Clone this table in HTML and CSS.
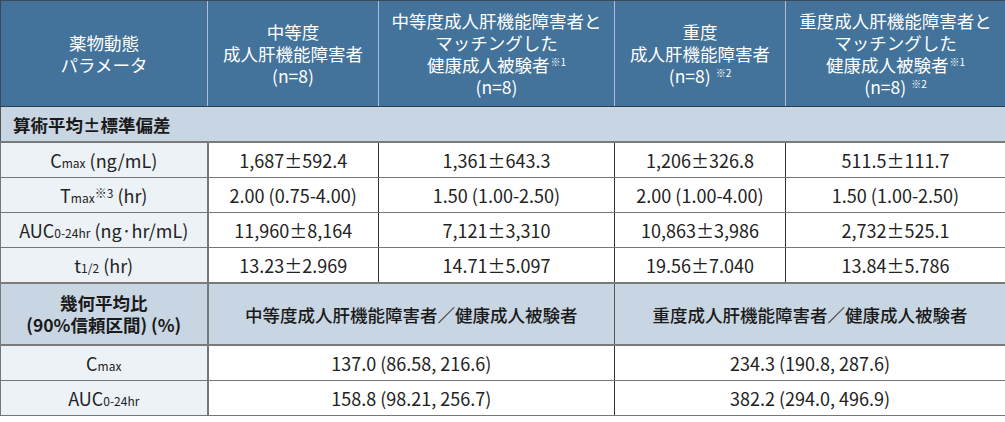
FILE: index.html
```html
<!DOCTYPE html>
<html lang="ja">
<head>
<meta charset="utf-8">
<link rel="stylesheet" href="styles.css">
</head>
<body>
<table class="pk">
  <colgroup>
    <col class="c1"><col class="c2"><col class="c3"><col class="c4"><col class="c5">
  </colgroup>
  <thead>
    <tr class="head">
      <th>薬物動態<br>パラメータ</th>
      <th>中等度<br>成人肝機能障害者<br>(n=8)</th>
      <th>中等度成人肝機能障害者と<br>マッチングした<br>健康成人被験者<sup>※1</sup><br>(n=8)</th>
      <th>重度<br>成人肝機能障害者<br>(n=8)<sup class="sp">※2</sup></th>
      <th>重度成人肝機能障害者と<br>マッチングした<br>健康成人被験者<sup>※1</sup><br>(n=8)<sup class="sp">※2</sup></th>
    </tr>
  </thead>
  <tbody>
    <tr class="section"><td colspan="5">算術平均±標準偏差</td></tr>
    <tr class="row">
      <td class="label">C<span class="sub">max</span> (ng/mL)</td>
      <td>1,687±592.4</td><td>1,361±643.3</td><td>1,206±326.8</td><td>511.5±111.7</td>
    </tr>
    <tr class="row">
      <td class="label">T<span class="sub">max</span><sup class="note">※3</sup> (hr)</td>
      <td>2.00 (0.75-4.00)</td><td>1.50 (1.00-2.50)</td><td>2.00 (1.00-4.00)</td><td>1.50 (1.00-2.50)</td>
    </tr>
    <tr class="row">
      <td class="label">AUC<span class="sub">0-24hr</span> (ng·hr/mL)</td>
      <td>11,960±8,164</td><td>7,121±3,310</td><td>10,863±3,986</td><td>2,732±525.1</td>
    </tr>
    <tr class="row">
      <td class="label">t<span class="sub">1/2</span> (hr)</td>
      <td>13.23±2.969</td><td>14.71±5.097</td><td>19.56±7.040</td><td>13.84±5.786</td>
    </tr>
    <tr class="gm-head">
      <td class="gm-label"><div class="gm-line">幾何平均比</div><div class="gm-line">(90%信頼区間) (%)</div></td>
      <td colspan="2">中等度成人肝機能障害者／健康成人被験者</td>
      <td colspan="2">重度成人肝機能障害者／健康成人被験者</td>
    </tr>
    <tr class="row">
      <td class="label">C<span class="sub">max</span></td>
      <td colspan="2">137.0 (86.58, 216.6)</td>
      <td colspan="2">234.3 (190.8, 287.6)</td>
    </tr>
    <tr class="row">
      <td class="label">AUC<span class="sub">0-24hr</span></td>
      <td colspan="2">158.8 (98.21, 256.7)</td>
      <td colspan="2">382.2 (294.0, 496.9)</td>
    </tr>
  </tbody>
</table>
</body>
</html>
```
FILE: styles.css
```css
html, body {
  margin: 0;
  padding: 0;
  background: #ffffff;
}
body {
  font-family: "Noto Sans CJK JP", "Noto Sans", sans-serif;
  color: #222;
}
.pk {
  border-collapse: collapse;
  table-layout: fixed;
  width: 1005px;
}
.c1 { width: 207px; }
.c2 { width: 171px; }
.c3 { width: 236px; }
.c4 { width: 171px; }
.c5 { width: 220px; }

.pk th, .pk td {
  padding: 0;
  text-align: center;
  vertical-align: middle;
}
.head th {
  height: 105px;
  background: #43739a;
  color: #ffffff;
  font-weight: 400;
  font-size: 17.5px;
  line-height: 22px;
  border-left: 1px solid #a9c0d6;
  border-top: 1px solid #3a4a58;
  border-bottom: 1px solid #2f3f4d;
}
.head th:first-child { border-left: 1px solid #3a4a58; }
.head th:last-child { border-right: 1px solid #3a4a58; }
.head sup {
  font-size: 10px;
  line-height: 0;
  vertical-align: 6px;
  margin-left: 1px;
}
.head sup.sp { margin-left: 5px; }

.section td {
  height: 34px;
  background: #c8d5e2;
  text-align: left;
  padding-left: 12px;
  font-weight: 700;
  font-size: 17.5px;
  color: #1a1a1a;
  border-left: 1px solid #555;
  border-right: 1px solid #555;
  border-bottom: 2px solid #7a7a7a;
}

.row td {
  height: 34px;
  font-size: 18px;
  color: #222;
  border-left: 1px solid #333;
  border-bottom: 1px solid #777;
}
.row td:last-child { border-right: 1px solid #555; }
.row td.label {
  background: #edf2f7;
  border-left: 1px solid #777;
  border-right: 2px solid #777;
  font-size: 18px;
}
.sub {
  font-size: 12px;
}
.note {
  font-size: 12px;
  line-height: 0;
  vertical-align: 5px;
}

.gm-head td {
  height: 60px;
  background: #c8d5e2;
  font-size: 17.5px;
  font-weight: 500;
  color: #1a1a1a;
  border-left: 1px solid #555;
  border-bottom: 2px solid #7a7a7a;
  border-top: 2px solid #7a7a7a;
}
.gm-head td:last-child { border-right: 1px solid #555; }
.gm-head td.gm-label {
  font-weight: 700;
  line-height: 22px;
  border-left: 1px solid #777;
  border-right: 2px solid #777;
}
.gm-line {
  line-height: 22px;
}
```
